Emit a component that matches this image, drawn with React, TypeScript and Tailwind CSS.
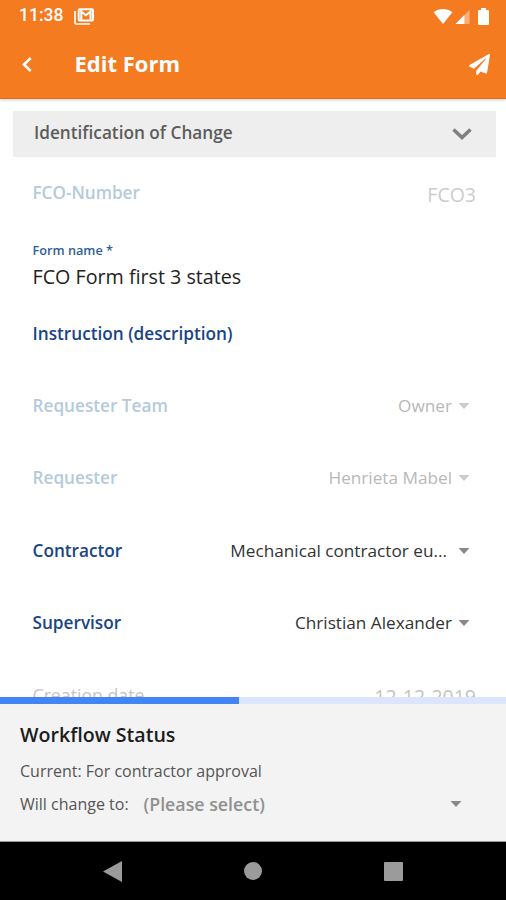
import { FaPaperPlane } from 'react-icons/fa';

const fields = [
  { label: 'Requester Team', value: 'Owner', disabled: true },
  { label: 'Requester', value: 'Henrieta Mabel', disabled: true },
  { label: 'Contractor', value: 'Mechanical contractor eu...', disabled: false },
  { label: 'Supervisor', value: 'Christian Alexander', disabled: false },
];

function Caret({ className }: { className: string }) {
  return (
    <svg viewBox="0 0 12 6" className={`h-[6px] w-[12px] ${className}`} fill="currentColor">
      <path d="M0.500 0h11L6 6z" />
    </svg>
  );
}

function StatusBar() {
  return (
    <div className="flex h-8 items-center pl-[19px] pr-[17px]">
      <span className="font-[Roboto] text-[17.500px] font-medium leading-none">11:38</span>
      {/* gmail notification */}
      <svg viewBox="0 0 20 17" className="ml-[11px] h-[17px] w-[20px]" fill="none" stroke="currentColor">
        <path d="M1 3v11.500a1.500 1.500 0 0 0 1.500 1.500H16" strokeWidth="1.700" />
        <rect x="4.700" y="1.200" width="14.300" height="11.300" rx="1" strokeWidth="2" />
        <path d="M7.300 12V3.500l4.600 3.700 4.600-3.700V12" strokeWidth="2.100" />
      </svg>
      <div className="ml-auto flex items-center">
        <svg viewBox="0 0 20 16" className="h-[15px] w-[20px]" fill="currentColor">
          <path d="M0 3.500C6-1 14-1 20 3.500L10 16z" />
        </svg>
        <svg viewBox="0 0 15 16" className="ml-[2px] h-[15px] w-[15px]" fill="currentColor">
          <path d="M15 1v15H0z" opacity="0.4" />
          <path d="M9.500 6.500V16H0z" />
        </svg>
        <svg viewBox="0 0 11 17" className="ml-[8px] h-[17px] w-[11px]" fill="currentColor">
          <path d="M3 0h5v2h2a1 1 0 0 1 1 1v13a1 1 0 0 1-1 1H1a1 1 0 0 1-1-1V3a1 1 0 0 1 1-1h2z" />
        </svg>
      </div>
    </div>
  );
}

export default function App() {
  return (
    <main className="flex h-[900px] w-[506px] flex-col overflow-hidden bg-white font-['Open_Sans',sans-serif]">
      <header className="z-10 h-[99px] shrink-0 border-b border-[#e06d18] bg-[#f47b20] text-white shadow-[0_1px_3px_rgba(0,0,0,0.2)]">
        <StatusBar />
        <div className="flex h-16 items-center pl-[22px] pr-[16px]">
          <svg viewBox="0 0 10 15" className="h-[15px] w-[10px]" fill="none" stroke="currentColor" strokeWidth="2.600">
            <path d="M8.700 1L2 7.500l6.700 6.500" />
          </svg>
          <h1 className="ml-[42.500px] pb-[2px] text-[22px] font-bold leading-none">Edit Form</h1>
          <FaPaperPlane className="ml-auto size-[21px]" />
        </div>
      </header>

      {/* FORM FIELDS */}
      <section className="h-[598px] shrink-0 overflow-hidden pt-[12px]">
        <div className="mr-[10px] ml-[13px] flex h-[46px] items-center justify-between bg-[#eeeeee] pr-[24px] pl-[21px] text-[#5c5c5c]">
          <h2 className="pb-[2px] text-[17.200px] font-semibold">Identification of Change</h2>
          <svg viewBox="0 0 20 13" className="h-[13px] w-[20px]" fill="none" stroke="#808080" strokeWidth="3.600">
            <path d="M1.500 1.500L10 9.500l8.500-8" />
          </svg>
        </div>

        <div className="flex h-[72px] items-center justify-between pr-[30px] pl-[32.500px]">
          <span className="text-[17.100px] font-semibold text-[#b5cadb]">FCO-Number</span>
          <span className="pt-[3px] text-[19.500px] text-[#cccccc]">FCO3</span>
        </div>

        <div className="h-[69px] pt-[13px] pl-[32.500px]">
          <p className="text-[12.700px] leading-4 font-semibold text-[#2f5f96]">Form name *</p>
          <p className="mt-[5px] text-[19.700px] leading-7 text-[#222]">FCO Form first 3 states</p>
        </div>

        <div className="flex h-[71px] items-center pl-[32.500px]">
          <span className="text-[17.200px] font-semibold text-[#184585]">Instruction (description)</span>
        </div>

        {fields.map((field) => (
          <div key={field.label} className="flex h-[72.500px] items-center pt-px pr-[36px] pl-[32.500px]">
            <span className={`text-[17.200px] font-semibold ${field.disabled ? 'text-[#b5cadb]' : 'text-[#184585]'}`}>
              {field.label}
            </span>
            {/* truncated values keep some room before the caret */}
            <span
              className={`ml-auto text-[17.200px] ${field.disabled ? 'text-[#b8b8b8]' : 'text-[#333]'} ${field.value.endsWith('...') ? 'pr-[5px]' : ''}`}
            >
              {field.value}
            </span>
            <Caret className={field.disabled ? 'ml-[6px] text-[#cccccc]' : 'ml-[6px] text-[#8a8a8a]'} />
          </div>
        ))}

        <div className="flex h-[72.500px] items-center justify-between pt-px pr-[30px] pl-[32.500px] text-[#c4c4c4]">
          <span className="text-[17.700px]">Creation date</span>
          <span className="pt-[2px] text-[19.500px]">12-12-2019</span>
        </div>
      </section>

      {/* WORKFLOW STATUS */}
      <div className="h-[7px] shrink-0 bg-[#dbe6fd]">
        <div className="h-full w-[239px] bg-[#4285f4]" />
      </div>
      <section className="h-[138px] shrink-0 border-b border-[#999] bg-[#f3f3f3] pt-[17px] pl-[20px]">
        <h2 className="text-[19.600px] leading-7 font-semibold text-[#1c1c1c]">Workflow Status</h2>
        <p className="mt-[10px] text-[16px] leading-6 text-[#555]">Current: For contractor approval</p>
        <div className="mt-[9px] flex items-center pr-[44px] text-[16px] leading-6 text-[#555]">
          <span>Will change to:</span>
          <span className="ml-[15px] text-[17.800px] font-semibold text-[#909090]">(Please select)</span>
          <Caret className="ml-auto text-[#8a8a8a]" />
        </div>
      </section>

      {/* ANDROID NAV */}
      <nav className="flex grow items-center bg-black pl-[103px] text-[#9b9b9b]">
        <svg viewBox="0 0 19 21" className="h-[21px] w-[19px]" fill="currentColor">
          <path d="M19 0v21L0 10.500z" />
        </svg>
        <div className="ml-[122px] size-[18px] rounded-full bg-[#9b9b9b]" />
        <div className="ml-[122px] size-[19px] rounded-[1px] bg-[#9b9b9b]" />
      </nav>
    </main>
  );
}
